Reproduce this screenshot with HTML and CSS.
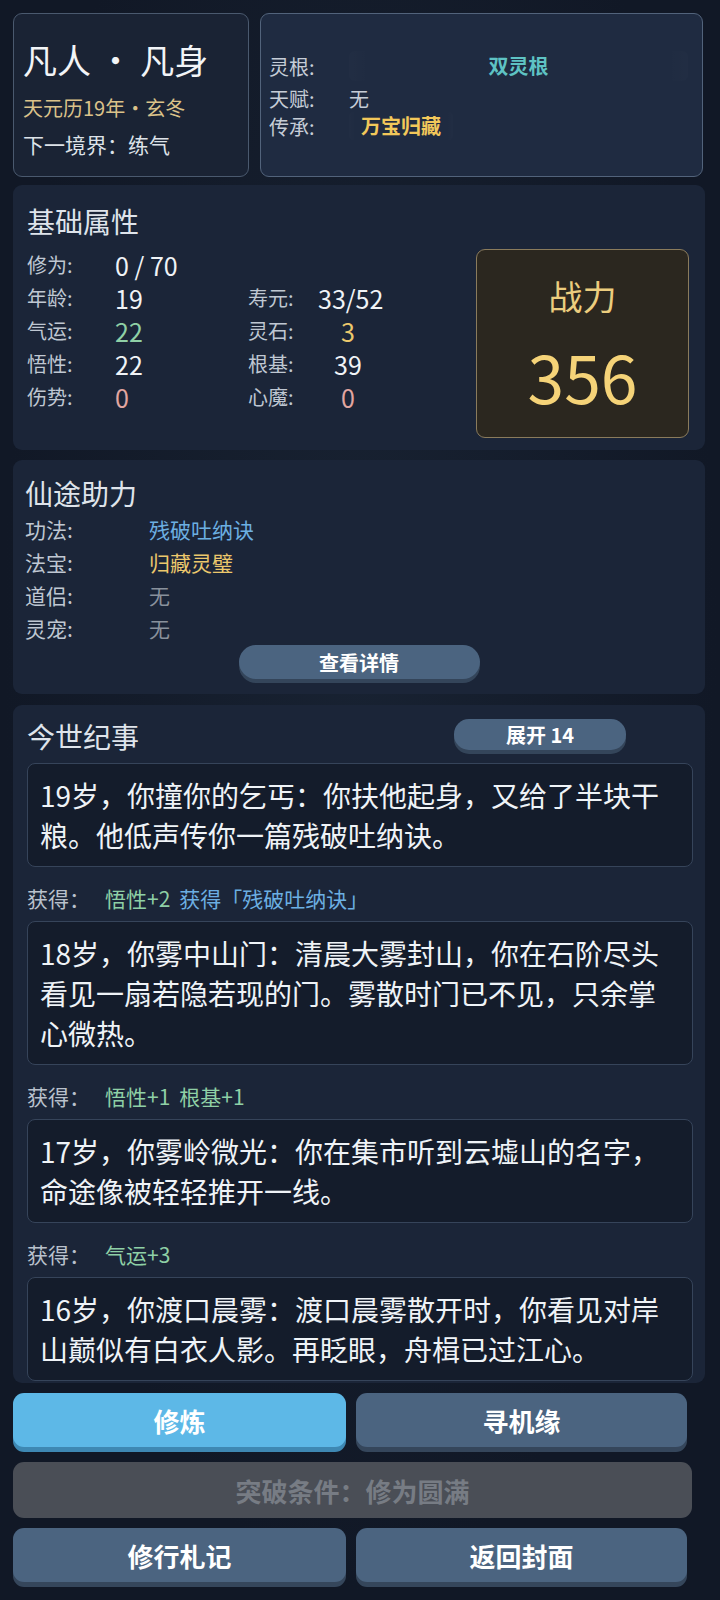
FILE: index.html
```html
<!DOCTYPE html>
<html lang="zh-CN">
<head>
    <meta charset="UTF-8">
    <meta name="viewport" content="width=device-width, initial-scale=1.0">
    <title>今世 - 修行</title>
    <link rel="stylesheet" href="styles.css">
</head>
<body>
    <div class="page">
        <div class="top-row">
            <div class="realm-card">
                <div class="realm-title">凡人 · 凡身</div>
                <div class="realm-date">天元历19年•玄冬</div>
                <div class="realm-next">下一境界：练气</div>
            </div>
            <div class="root-card">
                <div class="root-row tall">
                    <span class="root-label">灵根:</span>
                    <span class="pill wide teal">双灵根</span>
                </div>
                <div class="root-row">
                    <span class="root-label">天赋:</span>
                    <span class="plain">无</span>
                </div>
                <div class="root-row">
                    <span class="root-label">传承:</span>
                    <span class="pill gold">万宝归藏</span>
                </div>
            </div>
        </div>

        <section class="card stats-card">
            <h2>基础属性</h2>
            <div class="stats-body">
                <div class="stats">
                    <div class="stat-row">
                        <span class="lbl">修为:</span>
                        <span class="val">0 / 70</span>
                    </div>
                    <div class="stat-row">
                        <span class="lbl">年龄:</span>
                        <span class="val">19</span>
                        <span class="lbl2">寿元:</span>
                        <span class="val2">33/52</span>
                    </div>
                    <div class="stat-row">
                        <span class="lbl">气运:</span>
                        <span class="val green">22</span>
                        <span class="lbl2">灵石:</span>
                        <span class="val2 gold">3</span>
                    </div>
                    <div class="stat-row">
                        <span class="lbl">悟性:</span>
                        <span class="val">22</span>
                        <span class="lbl2">根基:</span>
                        <span class="val2">39</span>
                    </div>
                    <div class="stat-row">
                        <span class="lbl">伤势:</span>
                        <span class="val pink">0</span>
                        <span class="lbl2">心魔:</span>
                        <span class="val2 pink">0</span>
                    </div>
                </div>
                <div class="power-box">
                    <div class="power-label">战力</div>
                    <div class="power-num">356</div>
                </div>
            </div>
        </section>

        <section class="card aid-card">
            <h2>仙途助力</h2>
            <div class="aid-row"><span class="aid-lbl">功法:</span><span class="blue">残破吐纳诀</span></div>
            <div class="aid-row"><span class="aid-lbl">法宝:</span><span class="gold">归藏灵璧</span></div>
            <div class="aid-row"><span class="aid-lbl">道侣:</span><span class="gray">无</span></div>
            <div class="aid-row"><span class="aid-lbl">灵宠:</span><span class="gray">无</span></div>
            <div class="center"><button class="btn-small">查看详情</button></div>
        </section>

        <section class="card log-card">
            <div class="log-head">
                <h2>今世纪事</h2>
                <button class="btn-expand">展开 14</button>
            </div>
            <div class="entry">19岁，你撞你的乞丐：你扶他起身，又给了半块干粮。他低声传你一篇残破吐纳诀。</div>
            <div class="gain"><span class="gain-lbl">获得：</span><span class="tag green">悟性+2</span><span class="tag blue">获得「残破吐纳诀」</span></div>
            <div class="entry">18岁，你雾中山门：清晨大雾封山，你在石阶尽头看见一扇若隐若现的门。雾散时门已不见，只余掌心微热。</div>
            <div class="gain"><span class="gain-lbl">获得：</span><span class="tag green">悟性+1</span><span class="tag green">根基+1</span></div>
            <div class="entry">17岁，你雾岭微光：你在集市听到云墟山的名字，命途像被轻轻推开一线。</div>
            <div class="gain"><span class="gain-lbl">获得：</span><span class="tag green">气运+3</span></div>
            <div class="entry">16岁，你渡口晨雾：渡口晨雾散开时，你看见对岸山巅似有白衣人影。再眨眼，舟楫已过江心。</div>
        </section>

        <div class="actions">
            <div class="action-grid">
                <button class="btn primary">修炼</button>
                <button class="btn">寻机缘</button>
            </div>
            <button class="btn disabled">突破条件：修为圆满</button>
            <div class="action-grid">
                <button class="btn">修行札记</button>
                <button class="btn">返回封面</button>
            </div>
        </div>
    </div>
</body>
</html>
```

FILE: styles.css
```css
body {
    margin: 0;
    padding: 0;
    background-color: #131b28;
    background-image: radial-gradient(ellipse at 50% 40%, #182232 0%, #111826 70%);
    color: #e8edf2;
    font-family: "Noto Sans CJK SC", "Noto Sans", sans-serif;
}
.page {
    padding: 13px 15px 0 13px;
    min-height: 1587px;
}
.top-row {
    display: flex;
    gap: 11px;
    height: 164px;
    margin-right: 2px;
    margin-bottom: 8px;
}
.realm-card {
    width: 236px;
    box-sizing: border-box;
    background: #1a2334;
    border: 1px solid #4a596e;
    border-radius: 9px;
    padding: 22px 0 0 9px;
}
.realm-title {
    font-size: 34px;
    line-height: 48px;
    color: #f2f4f7;
}
.realm-date {
    font-size: 20px;
    line-height: 36px;
    margin-top: 6px;
    color: #dbc28a;
}
.realm-next {
    font-size: 21px;
    line-height: 36px;
    color: #dde2e8;
}
.root-card {
    flex: 1;
    box-sizing: border-box;
    background: #1f2b41;
    border: 1px solid #52637b;
    border-radius: 9px;
    padding: 34px 14px 0 8px;
}
.root-row {
    display: flex;
    align-items: center;
    height: 28px;
    font-size: 20px;
}
.root-row.tall {
    height: 36px;
}
.root-label {
    width: 80px;
    color: #c6cdd7;
}
.plain {
    color: #c6cdd7;
}
.pill {
    padding: 0 12px;
    line-height: 30px;
    border-radius: 6px;
    font-weight: bold;
    background: linear-gradient(90deg, rgba(255,255,255,0.012), rgba(255,255,255,0) 6%, rgba(255,255,255,0) 94%, rgba(255,255,255,0.012));
}
.pill.wide {
    flex: 1;
    text-align: center;
}
.teal {
    color: #5ec3c4;
}
.pill.gold {
    color: #f2c85a;
}
.card {
    background: #1b2538;
    border-radius: 9px;
}
.card h2 {
    margin: 0;
    font-size: 28px;
    font-weight: normal;
    line-height: 36px;
    color: #dfe4eb;
}
.stats-card {
    height: 265px;
    box-sizing: border-box;
    padding: 18px 16px 0 14px;
    margin-bottom: 10px;
}
.stats-body {
    display: flex;
    justify-content: space-between;
    align-items: flex-start;
}
.stats {
    padding-top: 9px;
}
.stat-row {
    display: flex;
    align-items: center;
    height: 33px;
}
.lbl, .lbl2 {
    font-size: 20px;
    color: #bfc7d2;
}
.lbl {
    width: 88px;
}
.lbl2 {
    width: 70px;
}
.val {
    width: 133px;
    font-size: 25px;
    color: #f0f3f6;
}
.val2 {
    width: 60px;
    text-align: center;
    font-size: 25px;
    color: #f0f3f6;
}
.green {
    color: #8fd0a6;
}
.gold {
    color: #ecc86c;
}
.pink {
    color: #e2a6a0;
}
.blue {
    color: #6cafe2;
}
.gray {
    color: #89919c;
}
.power-box {
    width: 213px;
    height: 189px;
    box-sizing: border-box;
    margin-top: 10px;
    background: #2b271f;
    border: 1.5px solid #8a7b5c;
    border-radius: 9px;
    text-align: center;
    padding-top: 24px;
}
.power-label {
    font-size: 34px;
    line-height: 44px;
    color: #eccd7e;
}
.power-num {
    margin-top: 22px;
    font-size: 66px;
    line-height: 70px;
    color: #f5d378;
}
.aid-card {
    height: 234px;
    box-sizing: border-box;
    padding: 15px 12px 0 12px;
    margin-bottom: 11px;
}
.aid-card h2 {
    margin-bottom: 1px;
}
.aid-row {
    display: flex;
    align-items: center;
    height: 33px;
    font-size: 21px;
}
.aid-lbl {
    width: 124px;
    color: #bfc7d2;
}
.center {
    text-align: center;
    padding-top: 1px;
}
.btn-small {
    width: 241px;
    height: 34px;
    border: none;
    border-radius: 17px;
    background: #4b6480;
    box-shadow: 0 4px 0 #34455a;
    color: #ffffff;
    font-family: inherit;
    font-size: 20px;
    font-weight: bold;
}
.log-card {
    height: 678px;
    box-sizing: border-box;
    overflow: hidden;
    padding: 11px 12px 0 14px;
    margin-bottom: 10px;
}
.log-head {
    display: flex;
    align-items: center;
    height: 40px;
    margin-bottom: 7px;
}
.log-head h2 {
    flex: 1;
}
.btn-expand {
    width: 172px;
    height: 31px;
    margin-right: 67px;
    margin-top: -4px;
    border: none;
    border-radius: 15px;
    background: #4b6480;
    box-shadow: 0 4px 0 #34455a;
    color: #ffffff;
    font-family: inherit;
    font-size: 20px;
    font-weight: bold;
}
.entry {
    background: #141c2b;
    border: 1px solid #36445a;
    border-radius: 8px;
    padding: 11px 12px;
    font-size: 28px;
    line-height: 40px;
    color: #eff3f7;
}
.gain {
    font-size: 21px;
    line-height: 30px;
    margin: 16px 0 8px;
}
.gain-lbl {
    display: inline-block;
    width: 78px;
    color: #b9c1cc;
}
.tag {
    margin-right: 9px;
}
.actions {
    display: flex;
    flex-direction: column;
    gap: 10px;
}
.action-grid {
    display: grid;
    grid-template-columns: 333px 331px;
    gap: 10px;
}
.btn {
    height: 54px;
    border: none;
    border-radius: 11px;
    background: #4b6480;
    box-shadow: 0 5px 0 #35465b;
    color: #ffffff;
    font-family: inherit;
    font-size: 26px;
    font-weight: bold;
    margin-bottom: 5px;
}
.btn.primary {
    background: #5db8e7;
    box-shadow: 0 5px 0 #3e88b3;
}
.btn.disabled {
    width: 679px;
    height: 56px;
    background: #4a4e56;
    box-shadow: none;
    color: #777c84;
    margin-bottom: 0;
}
```
